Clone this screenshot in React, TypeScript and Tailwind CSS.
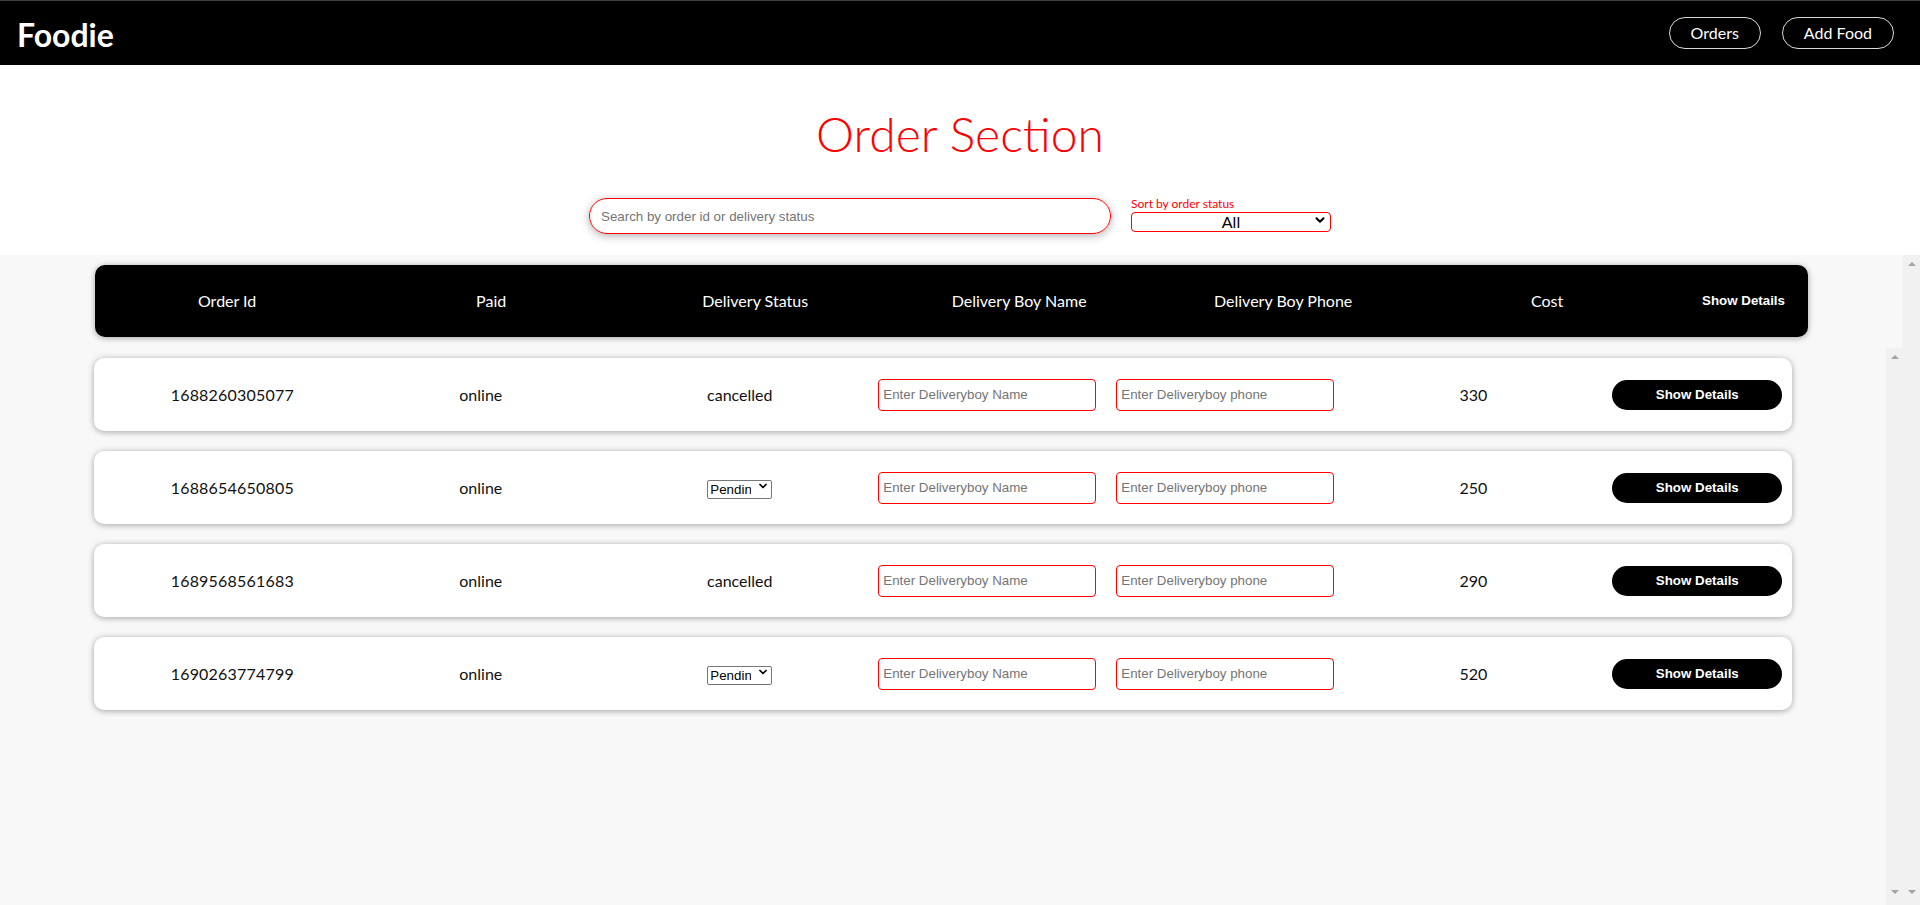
import { ChevronDown } from 'lucide-react';

type Order = {
  id: string;
  paid: string;
  status: 'cancelled' | 'pending';
  cost: number;
};

const orders: Order[] = [
  { id: '1688260305077', paid: 'online', status: 'cancelled', cost: 330 },
  { id: '1688654650805', paid: 'online', status: 'pending', cost: 250 },
  { id: '1689568561683', paid: 'online', status: 'cancelled', cost: 290 },
  { id: '1690263774799', paid: 'online', status: 'pending', cost: 520 },
];

const headings = ['Order Id', 'Paid', 'Delivery Status', 'Delivery Boy Name', 'Delivery Boy Phone', 'Cost'];

// classic windows-style scrollbar, the page in the shot has two of them
function FakeScrollbar() {
  return (
    <div className="w-[17px] shrink-0 bg-[#f1f1f1] flex flex-col items-center justify-between pt-[7px] pb-[11px]">
      <span className="w-0 h-0 border-x-[4px] border-x-transparent border-b-[4px] border-b-[#a3a3a3]" />
      <span className="w-0 h-0 border-x-[4px] border-x-transparent border-t-[4px] border-t-[#a3a3a3]" />
    </div>
  );
}

function OrderRow({ order }: { order: Order }) {
  return (
    <div className="w-[90%] mx-auto h-[73px] shrink-0 bg-white rounded-[10px] shadow-[0_1px_6px_rgba(0,0,0,0.35)] flex items-center text-[16px] text-[#111]">
      <div className="w-[276px] text-center tracking-[0.2px]">{order.id}</div>
      <div className="w-[221px] text-center">{order.paid}</div>
      <div className="w-[287px] pl-[10px] flex justify-center">
        {order.status === 'cancelled' ? (
          <span>cancelled</span>
        ) : (
          <div className="relative">
            <select
              defaultValue="pending"
              className="appearance-none w-[65px] h-[19px] border border-[#767676] rounded-[2px] bg-white pl-[2px] pr-[20px] text-[13.33px] text-black font-['Liberation_Sans',Arial,sans-serif] leading-none"
            >
              <option value="pending">Pending</option>
              <option value="delivered">Delivered</option>
              <option value="cancelled">Cancelled</option>
            </select>
            <ChevronDown size={12} strokeWidth={3.5} className="absolute right-[3px] top-[4px] pointer-events-none text-black" />
          </div>
        )}
      </div>
      <input
        placeholder="Enter Deliveryboy Name"
        className="w-[218px] h-[32px] border border-[#ff0000] rounded-[4px] px-[4px] text-[13.33px] font-['Liberation_Sans',Arial,sans-serif] placeholder:text-[#757575] outline-none"
      />
      <input
        placeholder="Enter Deliveryboy phone"
        className="ml-[20px] w-[218px] h-[32px] border border-[#ff0000] rounded-[4px] px-[4px] text-[13.33px] font-['Liberation_Sans',Arial,sans-serif] placeholder:text-[#757575] outline-none"
      />
      <div className="w-[278px] text-center">{order.cost}</div>
      <button className="w-[170px] h-[30px] rounded-full bg-black text-white font-bold text-[13.33px] font-['Liberation_Sans',Arial,sans-serif]">
        Show Details
      </button>
    </div>
  );
}

export default function App() {
  return (
    <div className="h-screen flex flex-col overflow-hidden font-['Lato','Open_Sans',sans-serif]">
      <nav className="h-[65px] shrink-0 bg-black border-t border-[#3f3f3f] flex items-center justify-between pl-[17px] pr-[26px]">
        <span className="text-white font-bold text-[32px] leading-none mt-[3px]">Foodie</span>
        <div className="flex items-center gap-[21px]">
          <button className="h-[32px] px-[21px] rounded-full border border-[#d9d9d9] text-white text-[16px]">Orders</button>
          <button className="h-[32px] px-[21px] rounded-full border border-[#d9d9d9] text-white text-[16px]">Add Food</button>
        </div>
      </nav>

      <section className="h-[190px] shrink-0 bg-white flex flex-col items-center">
        <h1 className="mt-[45px] text-[48px] leading-none font-light text-[#ff0000]">Order Section</h1>
        <div className="mt-[40px] flex items-end gap-5">
          <input
            placeholder="Search by order id or delivery status"
            className="w-[522px] h-[36px] rounded-full border border-[#ff0000] pl-[11px] text-[13.33px] font-['Liberation_Sans',Arial,sans-serif] placeholder:text-[#757575] shadow-[0_2px_8px_rgba(0,0,0,0.3)] outline-none"
          />
          <div className="flex flex-col">
            <label className="text-[12px] leading-[12px] text-[#ff0000]">Sort by order status</label>
            <div className="relative">
              <select
                defaultValue="all"
                className="appearance-none w-[200px] h-[20px] border border-[#ff0000] rounded-[4px] bg-white text-[16px] leading-none text-black [text-align-last:center]"
              >
                <option value="all">All</option>
                <option value="pending">Pending</option>
                <option value="delivered">Delivered</option>
                <option value="cancelled">Cancelled</option>
              </select>
              <ChevronDown size={14} strokeWidth={3.5} className="absolute right-[4px] top-[3px] pointer-events-none text-black" />
            </div>
          </div>
        </div>
      </section>

      <div className="flex-1 min-h-0 flex bg-[#f8f8f8]">
        <div className="flex-1 min-h-0 flex flex-col pt-[10px]">
          <div className="w-[90%] mx-auto h-[72px] shrink-0 bg-black rounded-[10px] shadow-[0_1px_6px_rgba(0,0,0,0.35)] grid grid-cols-[repeat(6,264px)_1fr] items-center text-white text-[16px]">
            {headings.map((h) => (
              <div key={h} className="text-center">{h}</div>
            ))}
            <div className="text-center font-bold text-[13.33px] font-['Liberation_Sans',Arial,sans-serif]">Show Details</div>
          </div>
          <div className="flex-1 min-h-0 flex mt-[11px]">
            <div className="flex-1 flex flex-col gap-5 pt-[10px] overflow-hidden">
              {orders.map((o) => (
                <OrderRow key={o.id} order={o} />
              ))}
            </div>
            <FakeScrollbar />
          </div>
        </div>
        <FakeScrollbar />
      </div>
    </div>
  );
}
